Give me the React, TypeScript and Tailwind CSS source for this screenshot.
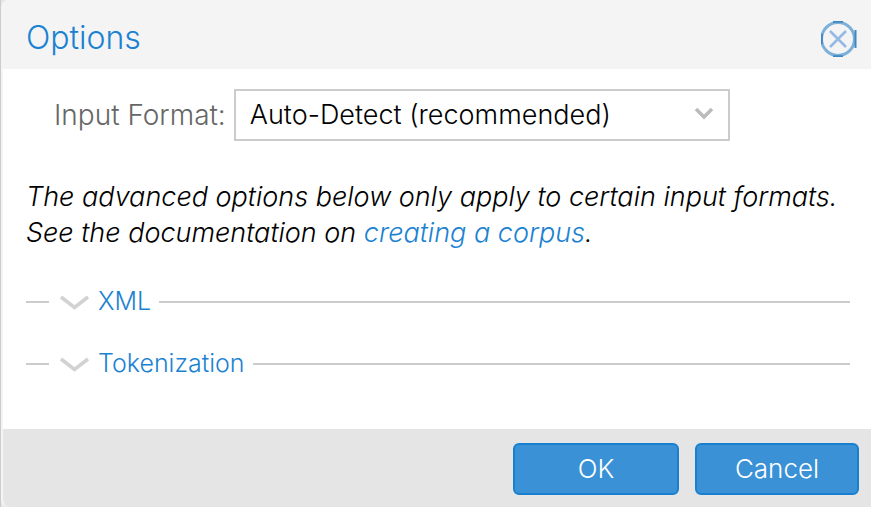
import { useState } from "react";

function Section({ title }: { title: string }) {
  const [open, setOpen] = useState(false);
  return (
    <section className="flex h-[62px] items-center">
      <span className="h-0.5 w-[23px] bg-[#cccccc]" />
      <button
        type="button"
        aria-expanded={open}
        onClick={() => setOpen(!open)}
        className="flex items-center pr-2 pb-0.5 pl-2.5 text-[25px] leading-8 text-[#1b82d2]"
      >
        <svg aria-hidden="true" className="mt-1 mr-2 h-4 w-[31px]" viewBox="0 0 31 16" fill="none">
          <path d="M2 2 L15.5 12.5 L29 2" stroke="#d2d2d2" strokeWidth="3.5" />
        </svg>
        {title}
      </button>
      <span className="h-0.5 flex-1 bg-[#cccccc]" />
    </section>
  );
}

export default function App() {
  return (
    <main className="flex min-h-screen flex-col border-l border-[#cccccc] bg-[#e8e8e8] font-['Inter','Liberation_Sans',sans-serif] font-light text-black">
      <div
        role="dialog"
        aria-labelledby="dialog-title"
        className="flex flex-1 flex-col overflow-hidden rounded-l-lg border-l-2 border-[#f4f4f4] bg-white"
      >
        <header className="flex h-[69px] items-center justify-between bg-[#f4f4f4] pt-2 pr-3.5 pl-[23px]">
          <h1 id="dialog-title" className="pb-0.5 text-[32px] leading-10 text-[#1b82d2]">
            Options
          </h1>
          <button type="button" aria-label="Close">
            <svg className="size-9" viewBox="0 0 36 36" fill="none">
              <circle cx="17" cy="18" r="16.5" stroke="#7db0d8" strokeWidth="3" />
              <path d="M12 .8h10M12 35.2h10M.8 13v10M34.5 9v18" stroke="#4088c0" strokeWidth="2" />
              <path d="M9 10 L25 26 M25 10 L9 26" stroke="#93b9e4" strokeWidth="2.5" />
            </svg>
          </button>
        </header>

        <div className="flex-1 pt-5 pr-[21px] pl-[23px]">
          <div className="flex items-center gap-2 pl-7">
            <label htmlFor="format" className="text-[28px] leading-9 text-[#666666]">
              Input Format:
            </label>
            <div className="relative w-[496px]">
              <select
                id="format"
                className="h-[52px] w-full appearance-none border-2 border-[#cccccc] bg-white pl-3.5 text-[27px] leading-9"
              >
                <option>Auto-Detect (recommended)</option>
              </select>
              <svg
                aria-hidden="true"
                className="pointer-events-none absolute top-[18px] right-4 h-3.5 w-5"
                viewBox="0 0 20 14"
                fill="none"
              >
                <path d="M2 2 L10 10 L18 2" stroke="#bbbbbb" strokeWidth="3.5" />
              </svg>
            </div>
          </div>

          <p className="mt-[38px] mb-5 text-[27px] leading-9 italic">
            The advanced options below only apply to certain input formats. See the documentation on{" "}
            <a href="#corpus" className="text-[#1b82d2]">
              creating a corpus
            </a>
            .
          </p>

          <Section title="XML" />
          <Section title="Tokenization" />
        </div>

        <footer className="flex h-[78px] justify-end gap-4 bg-[#e5e5e5] pt-3.5 pr-3">
          <button
            type="button"
            className="h-[52px] w-[166px] rounded-md border-2 border-[#1980cf] bg-[#3a91d6] pb-0.5 text-[26px] text-white"
          >
            OK
          </button>
          <button
            type="button"
            className="h-[52px] w-[164px] rounded-md border-2 border-[#1980cf] bg-[#3a91d6] pb-0.5 text-[26px] text-white"
          >
            Cancel
          </button>
        </footer>
      </div>
    </main>
  );
}
